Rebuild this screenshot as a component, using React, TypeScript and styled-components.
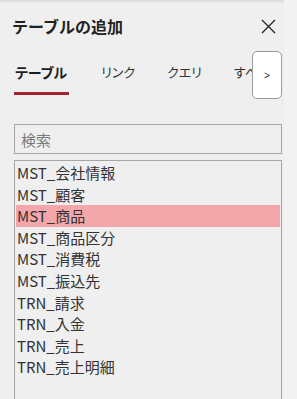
import { useState } from 'react';
import styled, { createGlobalStyle } from 'styled-components';

const GlobalStyle = createGlobalStyle`
  html, body {
    margin: 0;
    padding: 0;
    background: #f3f3f3;
    overflow: hidden;
  }
`;

const Panel = styled.div`
  width: 284px;
  height: 399px;
  box-sizing: border-box;
  background: #efefef;
  box-shadow: inset 0 3px 3px -2px rgba(0, 0, 0, 0.12);
  font-family: 'Noto Sans CJK JP', 'Noto Sans', sans-serif;
  color: #262626;
  display: flex;
  flex-direction: column;
  overflow: hidden;
`;

const Header = styled.div`
  display: flex;
  align-items: center;
  justify-content: space-between;
  height: 28px;
  margin-top: 12px;
  padding: 0 7px 0 12px;
`;

const Title = styled.h1`
  margin: 0;
  font-size: 16px;
  font-weight: 700;
  color: #222;
`;

const CloseButton = styled.button`
  width: 18px;
  height: 18px;
  padding: 0;
  border: none;
  background: none;
  display: flex;
  align-items: center;
  justify-content: center;
`;

const TabBar = styled.div`
  display: flex;
  align-items: stretch;
  margin-top: 11px;
  height: 48px;
  padding-left: 14px;
`;

const TabStrip = styled.div`
  display: flex;
  flex: 1;
  min-width: 0;
  overflow: hidden;
`;

const Tab = styled.div<{ $active?: boolean }>`
  display: flex;
  align-items: center;
  height: 41px;
  margin-right: 31px;
  padding: 0 ${(p) => (p.$active ? 2 : 0)}px 0 1px;
  font-size: ${(p) => (p.$active ? 14 : 13)}px;
  font-feature-settings: 'palt';
  font-weight: ${(p) => (p.$active ? 700 : 400)};
  color: ${(p) => (p.$active ? '#1e1e1e' : '#333')};
  border-bottom: 3px solid ${(p) => (p.$active ? '#a1242f' : 'transparent')};
  white-space: nowrap;
  flex-shrink: 0;
`;

const ScrollButton = styled.button`
  width: 30px;
  height: 48px;
  margin-right: 2px;
  flex-shrink: 0;
  box-sizing: border-box;
  border: 1px solid #9a9a9a;
  border-radius: 5px;
  background: #fff;
  font-size: 10px;
  color: #333;
  padding: 0;
  display: flex;
  align-items: center;
  justify-content: center;
`;

const Search = styled.input`
  margin: 25px 0 0 14px;
  width: 268px;
  height: 30px;
  box-sizing: border-box;
  border: 1px solid #a6a6a6;
  background: #efefef;
  padding: 0 6px;
  font-family: inherit;
  font-size: 15px;
  outline: none;

  &::placeholder {
    color: #7a7a7a;
  }
`;

const List = styled.ul`
  list-style: none;
  margin: 6px 0 0 14px;
  width: 268px;
  flex: 1;
  box-sizing: border-box;
  border: 1px solid #a6a6a6;
  border-bottom: none;
  padding: 1px 1px 0 1px;
`;

const Item = styled.li<{ $selected?: boolean }>`
  height: 21.6px;
  line-height: 21.6px;
  padding-left: 1px;
  font-size: 15px;
  color: #333;
  background: ${(p) => (p.$selected ? '#f4a7ab' : 'transparent')};
  white-space: nowrap;
`;

const tabs = ['テーブル', 'リンク', 'クエリ', 'すべて'];

const tables = [
  'MST_会社情報',
  'MST_顧客',
  'MST_商品',
  'MST_商品区分',
  'MST_消費税',
  'MST_振込先',
  'TRN_請求',
  'TRN_入金',
  'TRN_売上',
  'TRN_売上明細',
];

export default function App() {
  const [selected, setSelected] = useState('MST_商品');

  return (
    <>
      <GlobalStyle />
      <Panel>
        <Header>
          <Title>テーブルの追加</Title>
          <CloseButton aria-label="閉じる">
            <svg width="15" height="15" viewBox="0 0 15 15">
              <path d="M1 1 L14 14 M14 1 L1 14" stroke="#222" strokeWidth="1.3" />
            </svg>
          </CloseButton>
        </Header>
        <TabBar>
          <TabStrip>
            {tabs.map((t, i) => (
              <Tab key={t} $active={i === 0}>
                {t}
              </Tab>
            ))}
          </TabStrip>
          <ScrollButton>&gt;</ScrollButton>
        </TabBar>
        <Search placeholder="検索" />
        <List>
          {tables.map((t) => (
            <Item key={t} $selected={t === selected} onClick={() => setSelected(t)}>
              {t}
            </Item>
          ))}
        </List>
      </Panel>
    </>
  );
}
